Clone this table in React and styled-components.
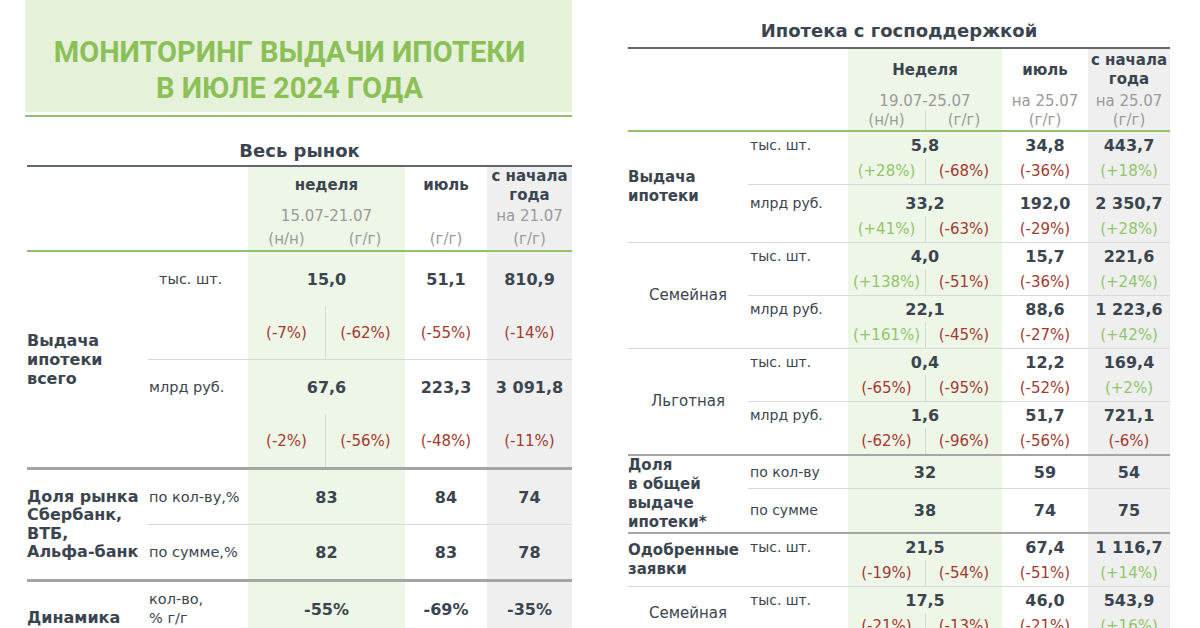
import React from 'react';
import styled, { createGlobalStyle, css } from 'styled-components';

const TEXT = '#3b4550';
const MUTED = '#9a9a9a';
const NEG = '#a3392f';
const POS = '#8fc66a';
const WEEK_BG = '#eef6e7';
const YTD_BG = '#efefef';
const GREEN_LINE = '#93c06a';
const THIN = '#d9d9d9';
const THICK = '#a5a5a5';

const LEFT = { label: 121, unit: 100, wk1: 77, wk2: 80, jul: 82, ytd: 85, rowH: 54, pctH: 53, font: 15 };
const RIGHT = { label: 120, unit: 100, wk1: 77, wk2: 77, jul: 86, ytd: 82, rowH: 26, pctH: 26, font: 15 };

const GlobalStyle = createGlobalStyle`
  html, body {
    margin: 0;
    padding: 0;
    background: #fff;
  }
  body {
    font-family: "DejaVu Sans", Verdana, sans-serif;
    color: ${TEXT};
    width: 1200px;
    height: 628px;
    overflow: hidden;
  }
`;

const Page = styled.div`
  display: flex;
  align-items: flex-start;
  gap: 56px;
  padding-left: 25px;
  width: 1200px;
  height: 628px;
  overflow: hidden;
  box-sizing: border-box;
`;

const Panel = styled.section`
  width: ${p => p.$w}px;
  display: flex;
  flex-direction: column;
`;

const Banner = styled.div`
  height: 112px;
  box-sizing: border-box;
  padding: 34px 18px 0 0;
  background: #e6f1da;
  text-align: center;
`;

const BannerTitle = styled.h1`
  margin: 0;
  font-family: Roboto, "Open Sans", sans-serif;
  font-weight: 700;
  font-size: 29px;
  line-height: 36px;
  color: #8bc057;
`;

const GreenRule = styled.div`
  margin-top: 3px;
  height: 2px;
  background: ${GREEN_LINE};
`;

const Inset = styled.div`
  margin-left: ${p => p.$inset || 0}px;
`;

const SectionTitle = styled.h2`
  margin: 0;
  height: ${p => p.$h}px;
  box-sizing: border-box;
  padding-top: ${p => p.$pad}px;
  font-size: 18px;
  line-height: 24px;
  font-weight: 700;
  text-align: center;
  color: ${TEXT};
  border-bottom: 2px solid #62676c;
`;

const stripes = c => {
  const a = c.label + c.unit;
  const b = a + c.wk1 + c.wk2;
  const d = b + c.jul;
  return `linear-gradient(to right, transparent ${a}px, ${WEEK_BG} ${a}px, ${WEEK_BG} ${b}px, transparent ${b}px, transparent ${d}px, ${YTD_BG} ${d}px)`;
};

const Table = styled.div`
  background: ${p => stripes(p.$c)};
  font-size: ${p => p.$c.font}px;
`;

const Header = styled.div`
  display: grid;
  grid-template-columns: ${p => `${p.$c.label + p.$c.unit}px ${p.$c.wk1}px ${p.$c.wk2}px ${p.$c.jul}px ${p.$c.ytd}px`};
  grid-template-rows: ${p => p.$rows};
  border-bottom: 2px solid ${GREEN_LINE};
`;

const HeadCell = styled.div`
  grid-column: ${p => p.$col};
  grid-row: ${p => p.$row};
  display: flex;
  align-items: center;
  justify-content: center;
  text-align: center;
  white-space: nowrap;
  ${p => p.$title
    ? css`font-weight: 700; color: ${TEXT}; line-height: 19px;`
    : css`color: ${MUTED};`}
  ${p => p.$split && css`border-left: 1px solid #d6dbd0;`}
`;

const Group = styled.div`
  display: grid;
  grid-template-columns: ${p => p.$c.label}px 1fr;
  ${p => p.$line === 'thin' && css`border-top: 1px solid ${THIN};`}
  ${p => p.$line === 'thick' && css`border-top: ${p.$thick || 3}px solid ${THICK};`}
`;

const GroupLabel = styled.div`
  align-self: center;
  font-size: ${p => p.$size}px;
  line-height: ${p => p.$lh}px;
  ${p => p.$bold
    ? css`font-weight: 700; text-align: left;`
    : css`font-weight: 400; text-align: center;`}
  ${p => p.$drop && css`padding-top: ${p.$drop}px;`}
`;

const SubRows = styled.div`
  display: flex;
  flex-direction: column;
`;

const SubRow = styled.div`
  display: grid;
  grid-template-columns: ${p => `${p.$c.unit}px ${p.$c.wk1}px ${p.$c.wk2}px ${p.$c.jul}px ${p.$c.ytd}px`};
  grid-template-rows: ${p => p.$rows};
  padding-top: ${p => p.$pad || 0}px;
  & + & {
    border-top: 1px solid ${THIN};
  }
`;

const Cell = styled.div`
  display: flex;
  align-items: center;
  justify-content: center;
  white-space: nowrap;
`;

const Unit = styled(Cell)`
  justify-content: flex-start;
  padding-left: ${p => p.$indent}px;
  font-size: ${p => p.$size}px;
  line-height: 19px;
  white-space: normal;
`;

const Value = styled(Cell)`
  grid-column: ${p => (p.$span ? 'span 2' : 'auto')};
  font-weight: 700;
  font-size: 16px;
`;

const Pct = styled(Cell)`
  grid-row: 2;
  grid-column: ${p => p.$col};
  color: ${p => (p.$tone === 'pos' ? POS : NEG)};
  ${p => p.$split && css`border-left: 1px solid #d6dbd0;`}
`;

const toneOf = s => (s.startsWith('(+') ? 'pos' : 'neg');

const market = [
  {
    label: ['Выдача', 'ипотеки', 'всего'], bold: true,
    items: [
      { unit: 'тыс. шт.', wk: '15,0', jul: '51,1', ytd: '810,9', pct: ['(-7%)', '(-62%)', '(-55%)', '(-14%)'], indent: 11 },
      { unit: 'млрд руб.', wk: '67,6', jul: '223,3', ytd: '3 091,8', pct: ['(-2%)', '(-56%)', '(-48%)', '(-11%)'] },
    ],
  },
  {
    label: ['Доля рынка', 'Сбербанк,', 'ВТБ,', 'Альфа-банк'], bold: true, line: 'thick', lh: 18.5,
    items: [
      { unit: 'по кол-ву,%', wk: '83', jul: '84', ytd: '74' },
      { unit: 'по сумме,%', wk: '82', jul: '83', ytd: '78' },
    ],
  },
  {
    label: ['Динамика'], bold: true, line: 'thick', drop: 16,
    items: [
      { unit: ['кол-во,', '% г/г'], wk: '-55%', jul: '-69%', ytd: '-35%' },
    ],
  },
];

const stateBacked = [
  {
    label: ['Выдача', 'ипотеки'], bold: true,
    items: [
      { unit: 'тыс. шт.', wk: '5,8', jul: '34,8', ytd: '443,7', pct: ['(+28%)', '(-68%)', '(-36%)', '(+18%)'] },
      { unit: 'млрд руб.', wk: '33,2', jul: '192,0', ytd: '2 350,7', pct: ['(+41%)', '(-63%)', '(-29%)', '(+28%)'], pad: 5 },
    ],
  },
  {
    label: ['Семейная'], line: 'thin',
    items: [
      { unit: 'тыс. шт.', wk: '4,0', jul: '15,7', ytd: '221,6', pct: ['(+138%)', '(-51%)', '(-36%)', '(+24%)'] },
      { unit: 'млрд руб.', wk: '22,1', jul: '88,6', ytd: '1 223,6', pct: ['(+161%)', '(-45%)', '(-27%)', '(+42%)'] },
    ],
  },
  {
    label: ['Льготная'], line: 'thin',
    items: [
      { unit: 'тыс. шт.', wk: '0,4', jul: '12,2', ytd: '169,4', pct: ['(-65%)', '(-95%)', '(-52%)', '(+2%)'] },
      { unit: 'млрд руб.', wk: '1,6', jul: '51,7', ytd: '721,1', pct: ['(-62%)', '(-96%)', '(-56%)', '(-6%)'] },
    ],
  },
  {
    label: ['Доля', 'в общей', 'выдаче', 'ипотеки*'], bold: true, line: 'thick', lh: 19,
    items: [
      { unit: 'по кол-ву', wk: '32', jul: '59', ytd: '54', h: 32 },
      { unit: 'по сумме', wk: '38', jul: '74', ytd: '75', h: 42 },
    ],
  },
  {
    label: ['Одобренные', 'заявки'], bold: true, line: 'thick', lh: 19,
    items: [
      { unit: 'тыс. шт.', wk: '21,5', jul: '67,4', ytd: '1 116,7', pct: ['(-19%)', '(-54%)', '(-51%)', '(+14%)'] },
    ],
  },
  {
    label: ['Семейная'], line: 'thin',
    items: [
      { unit: 'тыс. шт.', wk: '17,5', jul: '46,0', ytd: '543,9', pct: ['(-21%)', '(-13%)', '(-21%)', '(+16%)'] },
    ],
  },
];

const Lines = ({ lines }) =>
  lines.map((l, i) => (
    <React.Fragment key={i}>
      {i > 0 && <br />}
      {l}
    </React.Fragment>
  ));

const Body = ({ c, groups, labelSize, unitSize, unitIndent, thick }) =>
  groups.map((g, gi) => (
    <Group key={gi} $c={c} $line={g.line} $thick={thick}>
      <GroupLabel $bold={g.bold} $size={g.bold ? labelSize : c.font} $lh={g.lh || 19} $drop={g.drop}>
        <Lines lines={g.label} />
      </GroupLabel>
      <SubRows>
        {g.items.map((it, ii) => (
          <SubRow
            key={ii}
            $c={c}
            $pad={it.pad}
            $rows={it.pct ? `${c.rowH}px ${c.pctH}px` : `${it.h || c.rowH}px`}
          >
            <Unit $size={unitSize} $indent={it.indent ?? unitIndent}>
              {Array.isArray(it.unit) ? <span><Lines lines={it.unit} /></span> : it.unit}
            </Unit>
            <Value $span>{it.wk}</Value>
            <Value>{it.jul}</Value>
            <Value>{it.ytd}</Value>
            {it.pct && it.pct.map((p, pi) => (
              <Pct key={pi} $col={pi + 2} $split={pi === 1} $tone={toneOf(p)}>{p}</Pct>
            ))}
          </SubRow>
        ))}
      </SubRows>
    </Group>
  ));

export default function App() {
  return (
    <>
      <GlobalStyle />
      <Page>
        <Panel $w={547}>
          <Banner>
            <BannerTitle>
              МОНИТОРИНГ ВЫДАЧИ ИПОТЕКИ
              <br />
              В ИЮЛЕ 2024 ГОДА
            </BannerTitle>
          </Banner>
          <GreenRule />
          <Inset $inset={2}>
            <SectionTitle $h={50} $pad={22}>Весь рынок</SectionTitle>
            <Table $c={LEFT}>
              <Header $c={LEFT} $rows="37px 23px 23px">
                <HeadCell $col="2 / 4" $row="1" $title>неделя</HeadCell>
                <HeadCell $col="4" $row="1" $title>июль</HeadCell>
                <HeadCell $col="5" $row="1" $title>с начала<br />года</HeadCell>
                <HeadCell $col="2 / 4" $row="2">15.07-21.07</HeadCell>
                <HeadCell $col="5" $row="2">на 21.07</HeadCell>
                <HeadCell $col="2" $row="3">(н/н)</HeadCell>
                <HeadCell $col="3" $row="3">(г/г)</HeadCell>
                <HeadCell $col="4" $row="3">(г/г)</HeadCell>
                <HeadCell $col="5" $row="3">(г/г)</HeadCell>
              </Header>
              <Body c={LEFT} groups={market} labelSize={16} unitSize={14.5} unitIndent={1} thick={3} />
            </Table>
          </Inset>
        </Panel>

        <Panel $w={542}>
          <SectionTitle $h={49} $pad={19}>Ипотека с господдержкой</SectionTitle>
          <Table $c={RIGHT}>
            <Header $c={RIGHT} $rows="42px 19px 20px">
              <HeadCell $col="2 / 4" $row="1" $title>Неделя</HeadCell>
              <HeadCell $col="4" $row="1" $title>июль</HeadCell>
              <HeadCell $col="5" $row="1" $title>с начала<br />года</HeadCell>
              <HeadCell $col="2 / 4" $row="2">19.07-25.07</HeadCell>
              <HeadCell $col="4" $row="2">на 25.07</HeadCell>
              <HeadCell $col="5" $row="2">на 25.07</HeadCell>
              <HeadCell $col="2" $row="3">(н/н)</HeadCell>
              <HeadCell $col="3" $row="3" $split>(г/г)</HeadCell>
              <HeadCell $col="4" $row="3">(г/г)</HeadCell>
              <HeadCell $col="5" $row="3">(г/г)</HeadCell>
            </Header>
            <Body c={RIGHT} groups={stateBacked} labelSize={15} unitSize={14} unitIndent={2} thick={2} />
          </Table>
        </Panel>
      </Page>
    </>
  );
}
